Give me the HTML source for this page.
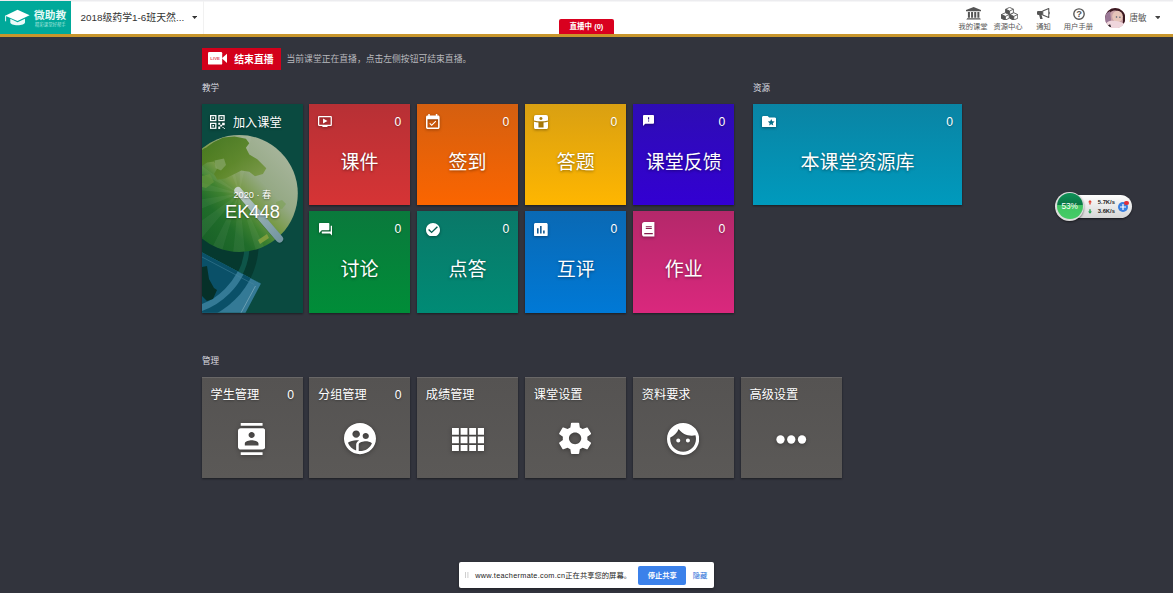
<!DOCTYPE html>
<html lang="zh-CN">
<head>
<meta charset="utf-8">
<title>微助教</title>
<style>
*{box-sizing:border-box;margin:0;padding:0}
html,body{width:1173px;height:593px;overflow:hidden}
body{background:#32343d;font-family:"Liberation Sans","Noto Sans CJK SC",sans-serif;color:#fff;position:relative}
#hdr{position:absolute;left:0;top:0;width:1173px;height:34px;background:linear-gradient(#ececef 0,#ececef 1px,#fff 2px)}
#gold{position:absolute;left:0;top:34px;width:1173px;height:3px;background:#c8962c}
#logo{position:absolute;left:0;top:1px;width:71px;height:33px;background:#00a99a}
#logo .t1{position:absolute;left:34px;top:6.5px;font-size:10.7px;font-weight:bold;line-height:14px;color:#e4faf6}
#logo .t2{position:absolute;left:35px;top:21px;font-size:4.4px;line-height:6px;color:#a8e6de;white-space:nowrap}
#course{position:absolute;left:80.5px;top:10px;font-size:9.9px;line-height:16px;color:#333;white-space:nowrap}
#caret{position:absolute;left:191.6px;top:15.9px;width:5.2px;height:2.9px}
#sep{position:absolute;left:203px;top:1px;width:1px;height:33px;background:#f1f1f1}
#live{position:absolute;left:559.2px;top:19.4px;width:54.6px;height:15px;background:#d9001f;border-radius:2px 2px 0 0;color:#fff;font-size:7.5px;line-height:15.5px;text-align:center;font-weight:bold}
.nav{position:absolute;top:22px;font-size:7.3px;line-height:9px;color:#555;white-space:nowrap;text-align:center;transform:translateX(-50%)}
svg.nic{position:absolute}
#uname{position:absolute;left:1129.5px;top:12px;font-size:8.55px;line-height:12px;color:#555;white-space:nowrap}
#ucaret{position:absolute;left:1154.6px;top:15.7px;width:5.8px;height:3.3px}
#avatar{position:absolute;left:1104.5px;top:7.6px;width:20.4px;height:20.4px}
#endbtn{position:absolute;left:201.7px;top:47.5px;width:79.1px;height:22px;background:#d3001b;color:#fff;font-size:9.85px;font-weight:bold;line-height:23px;padding-left:32.5px;white-space:nowrap}
#endtip{position:absolute;left:286.5px;top:54px;font-size:8.8px;line-height:11px;color:#b9b9bd;white-space:nowrap}
.sec{position:absolute;font-size:8.55px;line-height:10px;color:#dcdce0}
.tile{position:absolute;width:101.3px;height:101.2px;box-shadow:0 1px 2px rgba(0,0,0,.45)}
.tile .cnt{position:absolute;right:9px;top:10.5px;font-size:12.2px;line-height:14px;text-shadow:0 1px 2px rgba(0,0,0,.3)}
.tile .ttl{position:absolute;left:0;right:0;top:46px;text-align:center;font-size:19px;line-height:26px;text-shadow:0 1px 3px rgba(0,0,0,.45);white-space:nowrap}
svg.ic{position:absolute;filter:drop-shadow(0 1px 1.500px rgba(0,0,0,.38))}
svg.mic{position:absolute;filter:drop-shadow(0 1px 2px rgba(0,0,0,.35))}
.mt{position:absolute;width:101.2px;height:101.3px;background:linear-gradient(#555352,#5b5957);box-shadow:0 1px 2px rgba(0,0,0,.45),inset 0 1px 0 rgba(255,255,255,.12)}
.mt .nm{position:absolute;left:8.7px;top:8.3px;font-size:12.2px;line-height:20px;white-space:nowrap;text-shadow:0 1px 2px rgba(0,0,0,.35)}
.mt .cnt{position:absolute;right:9px;top:8.3px;font-size:12.2px;line-height:20px;text-shadow:0 1px 2px rgba(0,0,0,.35)}
#join{position:absolute;left:201.7px;top:104px;width:101.4px;height:208.8px;background:#0a4a40;overflow:hidden;box-shadow:0 1px 2px rgba(0,0,0,.45)}
#join svg.art{position:absolute;left:0;top:0;width:101.2px;height:208.8px}
#join .jl{position:absolute;left:31.3px;top:10.5px;font-size:12.15px;line-height:16px;white-space:nowrap;text-shadow:0 1px 2px rgba(0,0,0,.35)}
#join .yr{position:absolute;left:0;right:0;top:85px;text-align:center;font-size:9.2px;line-height:12px;white-space:nowrap;text-shadow:0 1px 2px rgba(0,0,0,.4)}
#join .code{position:absolute;left:0;right:0;top:97px;text-align:center;font-size:18.3px;line-height:22px;white-space:nowrap;text-shadow:0 1px 2px rgba(0,0,0,.4)}
#share{position:absolute;left:459.2px;top:562px;width:254.5px;height:26px;background:#fff;border-radius:2px;box-shadow:0 1px 3px rgba(0,0,0,.4)}
#share .tx{position:absolute;left:16px;top:8.8px;font-size:7.3px;line-height:10px;color:#222;white-space:nowrap}
#share .btn{position:absolute;left:179px;top:3.7px;width:48.1px;height:19px;background:#3b81ea;border-radius:2px;color:#fff;font-size:7.3px;font-weight:bold;line-height:20px;text-align:center}
#share .hide{position:absolute;left:233.5px;top:8.8px;font-size:7.3px;line-height:10px;color:#2a6fd8;white-space:nowrap}
#share .grip{position:absolute;left:6.2px;top:9.6px;width:3.6px;height:6.6px}
#fw{position:absolute;left:1055.3px;top:191.5px;width:78px;height:30px}
</style>
</head>
<body>
<div id="hdr"></div>
<div id="logo">
  <svg style="position:absolute;left:4px;top:8px;width:28px;height:19px" viewBox="4 9 28 19">
<path d="M17.500 9.800L29.600 15.300L17.500 20.900L5.200 15.700z" fill="#fff"/>
<path d="M10.300 18.800V22.200C10.300 24 13.500 25.300 17.600 25.300S25 24 25 22.200V18.700L17.500 22.200z" fill="#e9faf8"/>
<path d="M5.600 15.700V21.300" stroke="#fff" stroke-width=".9" fill="none"/>
</svg>
  <div class="t1">微助教</div>
  <div class="t2">精彩课堂好帮手</div>
</div>
<div id="course">2018级药学1-6班天然...</div>
<svg id="caret" viewBox="0 0 6 3.400"><path d="M0 0H6L3 3.400z" fill="#333"/></svg>
<div id="sep"></div>
<div id="live">直播中 (0)</div>
<div class="nav" style="left:973px">我的课堂</div>
<div class="nav" style="left:1008px">资源中心</div>
<div class="nav" style="left:1043.5px">通知</div>
<div class="nav" style="left:1078.4px">用户手册</div>
<svg class="nic" style="left:966px;top:6.600px;width:15.300px;height:13.900px" viewBox="0 0 16 14" preserveAspectRatio="none">
<path fill="#555" d="M8 0L16 3.100V4.300H0V3.100zM2 5.100h2.100v5.800H2zM5.300 5.100h2.100v5.800H5.300zM8.600 5.100h2.100v5.800H8.600zM11.900 5.100H14v5.800h-2.100zM1 11.300h14v1H1zM0 12.800h16V14H0z"/></svg>
<svg class="nic" style="left:1001.200px;top:6.600px;width:17.200px;height:13.400px" viewBox="0 0 18 14" preserveAspectRatio="none">
<g stroke="#555" stroke-width=".9" stroke-linejoin="round">
<path fill="#fff" d="M9 .400L13 2.300V6.200L9 8.100L5 6.200V2.300z"/><path fill="#555" d="M5 2.300L9 4.200V8.100L5 6.200z"/><path fill="none" d="M9 4.200L13 2.300"/>
<path fill="#fff" d="M4.600 6L8.600 7.900V11.800L4.600 13.600L.500 11.800V7.900z"/><path fill="#555" d="M.500 7.900L4.600 9.800V13.600L.500 11.800z"/><path fill="none" d="M4.600 9.800L8.600 7.900"/>
<path fill="#fff" d="M13.400 6L17.500 7.900V11.800L13.400 13.600L9.400 11.800V7.900z"/><path fill="#555" d="M9.400 7.900L13.400 9.800V13.600L9.400 11.800z"/><path fill="none" d="M13.400 9.800L17.500 7.900"/>
</g></svg>
<svg class="nic" style="left:1037px;top:7.700px;width:13.400px;height:11.500px" viewBox="0 0 14 12" preserveAspectRatio="none">
<path fill="#555" d="M1.300 3.200H6V7.300H1.300C.600 7.300 0 6.700 0 6V4.500C0 3.800.600 3.200 1.300 3.200zM2.200 7.300H4.800L6 11.700H3.400z"/>
<path fill="#fff" stroke="#555" stroke-width="1.100" stroke-linejoin="round" d="M6 3.200L12.300.600V9.900L6 7.300z"/>
<path fill="#555" d="M12.900 4h.5c.4 0 .6.500.6 1.200S13.800 6.500 13.400 6.500h-.5z"/></svg>
<svg class="nic" style="left:1072.600px;top:7.700px;width:12px;height:12px" viewBox="0 0 12 12"><circle cx="6" cy="6" r="5.200" fill="#fff" stroke="#555" stroke-width="1.350"/><text x="6" y="9.300" text-anchor="middle" font-family="Liberation Sans, sans-serif" font-size="9.400" font-weight="bold" fill="#555">?</text></svg>
<svg id="avatar" viewBox="0 0 20 20"><defs><clipPath id="avc"><circle cx="10" cy="10" r="10"/></clipPath></defs>
<g clip-path="url(#avc)"><rect width="20" height="20" fill="#c9a0a6"/>
<path d="M0 0H20V14L17 16C19 10 16 3 10 2.500C6 2.500 4 5 3 8L0 10z" fill="#3a1820"/>
<path d="M0 6L5 3L6 12L2 15L0 14z" fill="#9a7896"/>
<ellipse cx="12.300" cy="8.300" rx="5.200" ry="5.600" fill="#e6c4b8"/>
<path d="M2 14C6 11.500 14 12.500 18 15L17 20H3z" fill="#efd6dc"/>
<circle cx="11.300" cy="8.800" r=".8" fill="#4a5a70"/><circle cx="14.600" cy="9" r=".7" fill="#4a5a70"/>
<path d="M3 17L5 16L6 18.500L4 19z" fill="#2a2228"/>
</g></svg>
<div id="uname">唐敏</div>
<svg id="ucaret" viewBox="0 0 6 3.400"><path d="M0 0H6L3 3.400z" fill="#444"/></svg>
<div id="gold"></div>

<div id="endbtn"><svg style="position:absolute;left:6.200px;top:4.500px;width:19.400px;height:12.600px" viewBox="0 0 19.400 12.600">
<rect x="0" y="0" width="14.200" height="12.600" rx="1.200" fill="#fff"/><path d="M13.800 6.300L19.400 1.300V11.300z" fill="#fff"/>
<text x="7.100" y="7.900" text-anchor="middle" font-family="Liberation Sans, sans-serif" font-size="4.300" font-weight="bold" fill="#e05060">LIVE</text></svg>结束直播</div>
<div id="endtip">当前课堂正在直播，点击左侧按钮可结束直播。</div>

<div class="sec" style="left:202px;top:82.6px">教学</div>
<div class="sec" style="left:753px;top:82.6px">资源</div>
<div class="sec" style="left:202px;top:355.8px">管理</div>

<div id="join">
<svg class="art" viewBox="0 0 101.2 208.8" preserveAspectRatio="none">
<defs>
<linearGradient id="gg" x1="0.92" y1="0.12" x2="0.12" y2="0.9"><stop offset="0" stop-color="#a9b69e"/><stop offset=".32" stop-color="#95a985"/><stop offset=".48" stop-color="#789a48"/><stop offset=".6" stop-color="#3f8230"/><stop offset=".74" stop-color="#206c2a"/><stop offset="1" stop-color="#175f27"/></linearGradient>
<linearGradient id="cg" x1="0" y1="0" x2="1" y2="1"><stop offset="0" stop-color="#3f731a"/><stop offset=".55" stop-color="#5a8526"/><stop offset="1" stop-color="#7d9a4a"/></linearGradient>
<linearGradient id="hg" x1="0" y1="0" x2="1" y2="1"><stop offset="0" stop-color="#c3d0c6"/><stop offset=".5" stop-color="#93adb0"/><stop offset="1" stop-color="#7596a2"/></linearGradient>
<clipPath id="gc"><circle cx="37.3" cy="89.5" r="58.5"/></clipPath>
<clipPath id="bk"><path d="M0 148.500L59 179.600L43.500 208.800H0z"/></clipPath>
</defs>
<circle cx="-23.2" cy="138.8" r="80" fill="#06392f"/>
<circle cx="-23.2" cy="138.8" r="68.5" fill="none" stroke="#0e5549" stroke-width="5"/>
<circle cx="37.3" cy="89.5" r="58.5" fill="url(#gg)"/>
<g clip-path="url(#gc)">
<g fill="#fff" opacity=".05">
<path d="M37.300 89.500L-30 70L-30 84z"/><path d="M37.300 89.500L-30 100L-30 116z"/><path d="M37.300 89.500L-24 134L-14 150z"/><path d="M37.300 89.500L2 160L16 160z"/><path d="M37.300 89.500L30 160L44 160z"/><path d="M37.300 89.500L58 160L70 160z"/>
<path d="M37.300 89.500L-30 40L-30 54z"/><path d="M37.300 89.500L10 20L22 20z"/><path d="M37.300 89.500L40 20L52 20z"/>
</g>
<path d="M0 46L12 38L21.100 33.500L32.500 32.400L43.900 34.700L47.300 39.200L43.900 43.800L47.300 50.600L55.300 55.200L64.300 64.300L60.900 70L53 72.300L47.300 67.700L39.300 66.600L32.500 70L23.300 74.500L15.300 75.700L12 70L15.300 64.300L12 57.500L5.100 58.600L0 62z" fill="url(#cg)" opacity=".92"/>
<path d="M12.500 56.500L22 54.500L24 61L19 66.500L13.500 64z" fill="#86a466" opacity=".75"/>
<path d="M0 72L8 70L12 78L4 84L0 83z" fill="#6a9840" opacity=".6"/><path d="M0 30L12 24L16 34L4 44L0 44z" fill="#8aa050" opacity=".55"/>
<path d="M74 98L80 96L84 100L80 105L75 104z" fill="#7fa35a" opacity=".7"/>
<path d="M56 136L65 130L67 134L58 140z" fill="#8ea440" opacity=".8"/>
</g>
<path d="M36 86.500L77.500 135" stroke="#05352c" stroke-width="7.500" stroke-linecap="round" opacity=".25" transform="translate(0.800,1.500)"/>
<path d="M36 86.500L77.500 135" stroke="url(#hg)" stroke-width="7.300" stroke-linecap="round"/>
<path d="M0 148.500L59 179.600L43.500 208.800H0z" fill="#347a96"/>
<g clip-path="url(#bk)">
<circle cx="-23.2" cy="138.8" r="80" fill="#0a5068"/>
<circle cx="-23.2" cy="138.8" r="68.500" fill="none" stroke="#347a96" stroke-width="6.500"/>
<path d="M0 146.500L62 179" stroke="#0e5a5e" stroke-width="4"/>
<path d="M53.500 182L39 208.800" stroke="#6a9fb2" stroke-width="1" fill="none"/>
<path d="M52 180.500L0 153" stroke="#4a8aa0" stroke-width=".8" fill="none" opacity=".6"/>
<path d="M0 163L5 162L7 175L12 184L15 186L11 195L5 197L0 192z" fill="#063028"/>
</g>
</svg>
<svg class="ic" style="left:7.900px;top:10.800px;width:15.400px;height:14.500px" viewBox="0 0 16 15">
<g fill="none" stroke="#fff" stroke-width="1.300"><rect x=".650" y=".650" width="5.400" height="5.100"/><rect x="9.250" y=".650" width="5.400" height="5.100"/><rect x=".650" y="8.650" width="5.400" height="5.100"/></g>
<g fill="#fff"><rect x="2.500" y="2.400" width="1.700" height="1.600"/><rect x="11.100" y="2.400" width="1.700" height="1.600"/><rect x="2.500" y="10.400" width="1.700" height="1.600"/>
<path d="M8.600 8H10.600V10H8.600zM10.600 10H12.600V12H10.600zM12.600 8H15.300V10.500H12.600zM8.600 12H10.600V14.400H8.600zM13 12.400H14.200V13.400H13zM14.400 13.400H15.400V14.400H14.400z"/></g></svg>
  <div class="jl">加入课堂</div>
  <div class="yr">2020 · 春</div>
  <div class="code">EK448</div>
</div>

<div class="tile" style="left:308.9px;top:104px;background:linear-gradient(#b73035,#d63435)"><div class="cnt">0</div><div class="ttl">课件</div></div>
<div class="tile" style="left:416.95px;top:104px;background:linear-gradient(#d45f10,#fb6500)"><div class="cnt">0</div><div class="ttl">签到</div></div>
<div class="tile" style="left:525px;top:104px;background:linear-gradient(#d9a012,#ffb600)"><div class="cnt">0</div><div class="ttl">答题</div></div>
<div class="tile" style="left:633px;top:104px;background:linear-gradient(#2e0db4,#3300d2)"><div class="cnt">0</div><div class="ttl">课堂反馈</div></div>
<div class="tile" style="left:308.9px;top:211.4px;background:linear-gradient(#0a793c,#008d38)"><div class="cnt">0</div><div class="ttl">讨论</div></div>
<div class="tile" style="left:416.95px;top:211.4px;background:linear-gradient(#0a7868,#008b75)"><div class="cnt">0</div><div class="ttl">点答</div></div>
<div class="tile" style="left:525px;top:211.4px;background:linear-gradient(#0a69b4,#0079d6)"><div class="cnt">0</div><div class="ttl">互评</div></div>
<div class="tile" style="left:633px;top:211.4px;background:linear-gradient(#b4286a,#da287d)"><div class="cnt">0</div><div class="ttl">作业</div></div>
<div class="tile" style="left:753.1px;top:104px;width:209px;background:linear-gradient(#0a84a4,#009abd)"><div class="cnt">0</div><div class="ttl">本课堂资源库</div></div>
<svg class="ic" style="left:318.20px;top:115.80px;width:13.90px;height:11.20px" viewBox="1 3 22 18" preserveAspectRatio="none"><path fill="#fff" d="M21 3H3c-1.11 0-2 .89-2 2v12c0 1.1.89 2 2 2h5v2h8v-2h5c1.1 0 1.99-.9 1.99-2L23 5c0-1.11-.9-2-2-2zm0 14H3V5h18v12zm-5-6l-7 4V7z"/></svg>
<svg class="ic" style="left:426.40px;top:114.00px;width:13.60px;height:15.10px" viewBox="3 1 18 20" preserveAspectRatio="none"><path fill="#fff" d="M16.53 11.06L15.47 10l-4.88 4.88-2.12-2.12-1.06 1.06L10.59 17l5.94-5.94zM19 3h-1V1h-2v2H8V1H6v2H5c-1.11 0-1.99.9-1.99 2L3 19c0 1.1.89 2 2 2h14c1.1 0 2-.9 2-2V5c0-1.1-.9-2-2-2zm0 16H5V8h14v11z"/></svg>
<svg class="ic" style="left:534.00px;top:114.50px;width:14.00px;height:14.20px" viewBox="0 0 22 22" preserveAspectRatio="none"><path fill="#7a5200" opacity=".35" d="M7 11h8v8.500H7z"/><path fill="#fff" fill-rule="evenodd" d="M3 0h16a3 3 0 0 1 3 3v5.400c-3.500 1-7 1.400-11 1.400S3.500 9.400 0 8.400V3a3 3 0 0 1 3-3zM10.900 3.100a2.400 2.400 0 1 0 .01 0zM0 10.300c2.500.7 4.500 1 7 1.200V19.500h8v-8c2.500-.2 4.500-.5 7-1.200V19a3 3 0 0 1-3 3H3a3 3 0 0 1-3-3z"/></svg>
<svg class="ic" style="left:642.90px;top:114.90px;width:11.20px;height:11.00px" viewBox="2 2 20 20" preserveAspectRatio="none"><path fill="#fff" d="M20 2H4c-1.1 0-1.99.9-1.99 2L2 22l4-4h14c1.1 0 2-.9 2-2V4c0-1.1-.9-2-2-2zm-7 12h-2v-2h2v2zm0-4h-2V6h2v4z"/></svg>
<svg class="ic" style="left:318.60px;top:222.80px;width:13.80px;height:13.20px" viewBox="2 2 20 20" preserveAspectRatio="none"><path fill="#fff" d="M21 6h-2v9H6v2c0 .55.45 1 1 1h11l4 4V7c0-.55-.45-1-1-1zm-4 6V3c0-.55-.45-1-1-1H3c-.55 0-1 .45-1 1v14l4-4h10c.55 0 1-.45 1-1z"/></svg>
<svg class="ic" style="left:426.20px;top:222.70px;width:14.00px;height:13.80px" viewBox="2 2 20 20" preserveAspectRatio="none"><path fill="#fff" d="M12 2C6.48 2 2 6.48 2 12s4.48 10 10 10 10-4.48 10-10S17.52 2 12 2zm-2 15l-5-5 1.41-1.41L10 14.17l7.59-7.59L19 8l-9 9z"/></svg>
<svg class="ic" style="left:534.00px;top:222.60px;width:13.70px;height:13.50px" viewBox="3 3 18 18" preserveAspectRatio="none"><path fill="#fff" d="M19 3H5c-1.1 0-2 .9-2 2v14c0 1.1.9 2 2 2h14c1.1 0 2-.9 2-2V5c0-1.1-.9-2-2-2zM9 17H7v-7h2v7zm4 0h-2V7h2v10zm4 0h-2v-4h2v4z"/></svg>
<svg class="ic" style="left:642.20px;top:222.20px;width:12.40px;height:14.50px" viewBox="0 0 17 20" preserveAspectRatio="none"><path fill="#fff" fill-rule="evenodd" d="M3.500 0H17v20H3.500A3.500 3.500 0 0 1 0 16.500v-13A3.500 3.500 0 0 1 3.500 0zM5.200 6v1.300h8.200V6zM5.200 8.400v1.300h8.200V8.400zM3.800 15.200a.9.900 0 0 0 0 1.800H14.800v-1.800z"/></svg>
<svg class="ic" style="left:762.00px;top:115.60px;width:14.20px;height:11.80px" viewBox="2 4 20 16" preserveAspectRatio="none"><path fill="#fff" d="M20 6h-8l-2-2H4c-1.1 0-1.99.9-1.99 2L2 18c0 1.1.9 2 2 2h16c1.1 0 2-.9 2-2V8c0-1.1-.9-2-2-2zm-2.06 11L15 15.28 12.06 17l.78-3.33-2.59-2.24 3.41-.29L15 8l1.34 3.14 3.41.29-2.59 2.24.78 3.33z"/></svg>

<div class="mt" style="left:201.8px;top:377.2px"><div class="nm">学生管理</div><div class="cnt">0</div></div>
<div class="mt" style="left:309.3px;top:377.2px"><div class="nm">分组管理</div><div class="cnt">0</div></div>
<div class="mt" style="left:417.1px;top:377.2px"><div class="nm">成绩管理</div></div>
<div class="mt" style="left:525.1px;top:377.2px"><div class="nm">课堂设置</div></div>
<div class="mt" style="left:633.1px;top:377.2px"><div class="nm">资料要求</div></div>
<div class="mt" style="left:740.8px;top:377.2px"><div class="nm">高级设置</div></div>
<svg class="mic" style="left:238.20px;top:423.10px;width:27.30px;height:31.90px" viewBox="2 0 20 24" preserveAspectRatio="none"><path fill="#fff" d="M20 0H4v2h16V0zM4 24h16v-2H4v2zM20 4H4c-1.1 0-2 .9-2 2v12c0 1.1.9 2 2 2h16c1.1 0 2-.9 2-2V6c0-1.1-.9-2-2-2zm-8 2.75c1.24 0 2.25 1.01 2.25 2.25s-1.01 2.25-2.25 2.25S9.75 10.24 9.75 9 10.76 6.75 12 6.75zM17 17H7v-1.5c0-1.67 3.33-2.5 5-2.5s5 .83 5 2.5V17z"/></svg>
<svg class="mic" style="left:344.00px;top:423.40px;width:32.00px;height:31.20px" viewBox="2 2 20 20" preserveAspectRatio="none"><path fill="#fff" d="M11.99 2c-5.52 0-10 4.48-10 10s4.48 10 10 10 10-4.48 10-10-4.48-10-10-10zm3.61 6.34c1.07 0 1.93.86 1.93 1.93 0 1.07-.86 1.93-1.93 1.93-1.07 0-1.93-.86-1.93-1.93-.01-1.07.86-1.93 1.93-1.93zm-6-1.58c1.3 0 2.36 1.06 2.36 2.36 0 1.3-1.06 2.36-2.36 2.36s-2.36-1.06-2.36-2.36c0-1.31 1.05-2.36 2.36-2.36zm0 9.13v3.75c-2.4-.75-4.3-2.6-5.14-4.96 1.05-1.12 3.67-1.69 5.14-1.69.53 0 1.2.08 1.9.22-1.64.87-1.9 2.02-1.9 2.68zM11.99 20c-.27 0-.53-.01-.79-.04v-4.07c0-1.42 2.94-2.13 4.4-2.13 1.07 0 2.92.39 3.84 1.15-1.17 2.97-4.06 5.09-7.45 5.09z"/></svg>
<svg class="mic" style="left:451.50px;top:427.70px;width:32.70px;height:23.80px" viewBox="3 5 19 14" preserveAspectRatio="none"><path fill="#fff" d="M3 9h4V5H3v4zm0 5h4v-4H3v4zm5 0h4v-4H8v4zm5 0h4v-4h-4v4zM8 9h4V5H8v4zm5-4v4h4V5h-4zm5 9h4v-4h-4v4zM3 19h4v-4H3v4zm5 0h4v-4H8v4zm5 0h4v-4h-4v4zm5 0h4v-4h-4v4zm0-14v4h4V5h-4z"/></svg>
<svg class="mic" style="left:559.10px;top:422.30px;width:32.20px;height:32.70px" viewBox="2.6 2 18.8 20" preserveAspectRatio="none"><path fill="#fff" d="M19.14 12.94c.04-.3.06-.61.06-.94 0-.32-.02-.64-.07-.94l2.03-1.58c.18-.14.23-.41.12-.61l-1.92-3.32c-.12-.22-.37-.29-.59-.22l-2.39.96c-.5-.38-1.03-.7-1.62-.94l-.36-2.54c-.04-.24-.24-.41-.48-.41h-3.84c-.24 0-.43.17-.47.41l-.36 2.54c-.59.24-1.13.57-1.62.94l-2.39-.96c-.22-.08-.47 0-.59.22L2.74 8.87c-.12.21-.08.47.12.61l2.03 1.58c-.05.3-.09.63-.09.94s.02.64.07.94l-2.03 1.58c-.18.14-.23.41-.12.61l1.92 3.32c.12.22.37.29.59.22l2.39-.96c.5.38 1.03.7 1.62.94l.36 2.54c.05.24.24.41.48.41h3.84c.24 0 .44-.17.47-.41l.36-2.54c.59-.24 1.13-.56 1.62-.94l2.39.96c.22.08.47 0 .59-.22l1.92-3.32c.12-.22.07-.47-.12-.61l-2.01-1.58zM12 15.6c-1.98 0-3.6-1.62-3.6-3.6s1.62-3.6 3.6-3.6 3.6 1.62 3.6 3.6-1.62 3.6-3.6 3.6z"/></svg>
<svg class="mic" style="left:666.80px;top:423.10px;width:32.20px;height:31.90px" viewBox="2 2 20 20" preserveAspectRatio="none"><path fill="#fff" d="M9 11.75c-.69 0-1.25.56-1.25 1.25s.56 1.25 1.25 1.25 1.25-.56 1.25-1.25-.56-1.25-1.25-1.25zm6 0c-.69 0-1.25.56-1.25 1.25s.56 1.25 1.25 1.25 1.25-.56 1.25-1.25-.56-1.25-1.25-1.25zM12 2C6.48 2 2 6.48 2 12s4.48 10 10 10 10-4.48 10-10S17.52 2 12 2zm0 18c-4.41 0-8-3.59-8-8 0-.29.02-.58.05-.86 2.36-1.05 4.23-2.98 5.21-5.37C11.07 8.33 14.05 10 17.42 10c.78 0 1.53-.09 2.25-.26.21.71.33 1.47.33 2.26 0 4.41-3.59 8-8 8z"/></svg>
<svg class="mic" style="left:776.00px;top:435.10px;width:30.50px;height:9.00px" viewBox="0 0 30.5 9" preserveAspectRatio="none"><circle cx="4.5" cy="4.5" r="4.15" fill="#fff"/><circle cx="15.25" cy="4.500" r="4.150" fill="#fff"/><circle cx="26" cy="4.500" r="4.150" fill="#fff"/></svg>

<div id="fw">
<div style="position:absolute;left:12px;top:3.300px;width:64.700px;height:23.200px;border-radius:11.600px;background:linear-gradient(#fdfdfd,#d6d6d6);box-shadow:0 1px 2px rgba(0,0,0,.5)"></div>
<div style="position:absolute;left:0;top:0;width:28.800px;height:29.200px;border-radius:50%;background:#dcdcdc;box-shadow:0 1px 2px rgba(0,0,0,.5)"></div>
<div style="position:absolute;left:1.500px;top:1.500px;width:25.800px;height:26.200px;border-radius:50%;background:linear-gradient(#0f9258 0,#0a7444 46%,#3fc462 47%,#45cc66 100%)"></div>
<div style="position:absolute;left:0;top:9.300px;width:28.800px;text-align:center;font-size:8.300px;line-height:10px;color:#fff">53%</div>
<svg style="position:absolute;left:32.300px;top:8.400px;width:4px;height:14px" viewBox="0 0 4 14"><path d="M2 0L4 2.200H2.700V4.600H1.300V2.200H0z" fill="#e04030"/><path d="M2 13.800L4 11.600H2.700V9.200H1.300v2.400H0z" fill="#20a050"/></svg>
<div style="position:absolute;left:42.500px;top:7px;font-size:5.800px;line-height:7px;font-weight:bold;color:#222;white-space:nowrap">5.7K/s</div>
<div style="position:absolute;left:42.500px;top:16.200px;font-size:5.800px;line-height:7px;font-weight:bold;color:#222;white-space:nowrap">3.6K/s</div>
<div style="position:absolute;left:62.400px;top:10px;width:10.300px;height:10.300px;border-radius:50%;background:#3a7fe0"></div>
<svg style="position:absolute;left:64.500px;top:12.100px;width:6px;height:6px" viewBox="0 0 6 6"><path d="M2.400 0h1.200v2.400H6v1.200H3.600V6H2.400V3.600H0V2.400h2.400z" fill="#fff"/></svg>
<div style="position:absolute;left:69.100px;top:9px;width:4.600px;height:4.600px;border-radius:50%;background:#e0303a"></div>
</div>

<div id="share">
  <svg class="grip" viewBox="0 0 3.600 6.600"><path d="M.500 0V6.600M2.900 0V6.600" stroke="#c0c0c0" stroke-width=".8" fill="none"/></svg>
  <div class="tx"><span style="letter-spacing:.3px">www.teachermate.com.cn</span>正在共享您的屏幕。</div>
  <div class="btn">停止共享</div>
  <div class="hide">隐藏</div>
</div>

</body>
</html>
